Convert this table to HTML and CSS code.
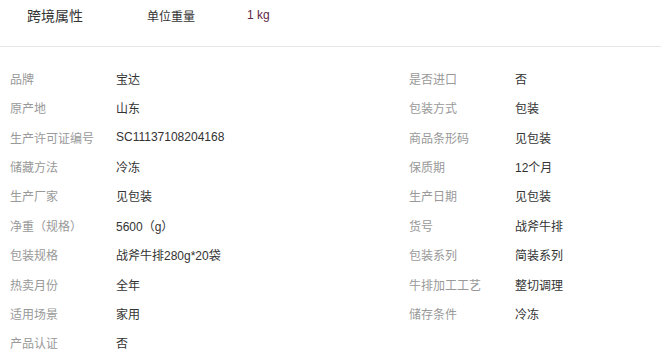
FILE: index.html
```html
<!DOCTYPE html>
<html lang="zh">
<head>
<meta charset="utf-8">
<link rel="stylesheet" href="styles.css">
</head>
<body>
<div class="cross">
  <span class="cross-title">跨境属性</span>
  <span class="cross-label">单位重量</span>
  <span class="cross-value">1 kg</span>
</div>
<div class="attrs">
  <span class="k">品牌</span><span class="v">宝达</span><span class="k">是否进口</span><span class="v">否</span>
  <span class="k">原产地</span><span class="v">山东</span><span class="k">包装方式</span><span class="v">包装</span>
  <span class="k">生产许可证编号</span><span class="v">SC11137108204168</span><span class="k">商品条形码</span><span class="v">见包装</span>
  <span class="k">储藏方法</span><span class="v">冷冻</span><span class="k">保质期</span><span class="v">12个月</span>
  <span class="k">生产厂家</span><span class="v">见包装</span><span class="k">生产日期</span><span class="v">见包装</span>
  <span class="k">净重（规格）</span><span class="v">5600（g）</span><span class="k">货号</span><span class="v">战斧牛排</span>
  <span class="k">包装规格</span><span class="v">战斧牛排280g*20袋</span><span class="k">包装系列</span><span class="v">简装系列</span>
  <span class="k">热卖月份</span><span class="v">全年</span><span class="k">牛排加工工艺</span><span class="v">整切调理</span>
  <span class="k">适用场景</span><span class="v">家用</span><span class="k">储存条件</span><span class="v">冷冻</span>
  <span class="k">产品认证</span><span class="v">否</span>
</div>
</body>
</html>
```
FILE: styles.css
```css
html, body {
  margin: 0;
  padding: 0;
  background: #fff;
  font-family: "Liberation Sans", "Noto Sans CJK SC", sans-serif;
  color: #333;
}
.cross {
  display: flex;
  align-items: center;
  height: 30px;
  padding-left: 27px;
  padding-bottom: 16px;
  border-bottom: 1px solid #e6e6e6;
  margin-bottom: 16.6px;
}
.cross-title {
  font-size: 14px;
  width: 120px;
}
.cross-label {
  font-size: 12px;
  width: 100px;
}
.cross-value {
  font-size: 12px;
  color: #5e2748;
}
.attrs {
  display: grid;
  grid-template-columns: 106px 293px 106px 1fr;
  grid-auto-rows: 29.4px;
  padding-left: 10px;
  font-size: 12px;
  align-items: center;
}
.k {
  color: #999;
  white-space: nowrap;
}
.v {
  color: #333;
  white-space: nowrap;
}
```
